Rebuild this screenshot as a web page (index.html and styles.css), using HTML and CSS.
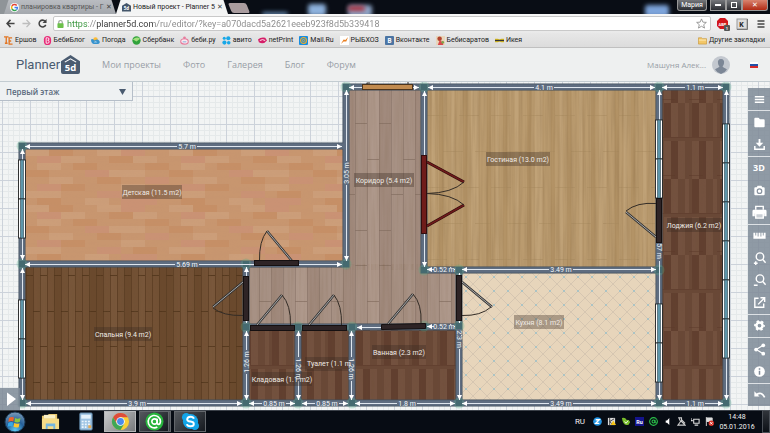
FILE: index.html
```html
<!DOCTYPE html>
<html lang="ru">
<head>
<meta charset="utf-8">
<title>Новый проект - Planner 5D</title>
<link rel="stylesheet" href="styles.css">
</head>
<body>
<div class="screen">
  <header class="browser">
    <div class="tabstrip">
      <div class="glow" aria-hidden="true"><i class="g1"></i><i class="g2"></i><i class="g3"></i><i class="g4"></i><i class="g5"></i></div>
      <div class="tabs">
        <div class="tab">
          <svg class="fav" viewBox="0 0 16 16"><circle cx="8" cy="8" r="8" fill="#fff"/><g fill="none" stroke-width="2.6"><path d="M12 4.500A5.200 5.200 0 0 0 3.500 5.500" stroke="#e34133"/><path d="M3.500 5.500a5.200 5.200 0 0 0 0 5" stroke="#f3b605"/><path d="M3.500 10.500A5.200 5.200 0 0 0 11.500 12" stroke="#32a350"/><path d="M11.500 12a5 5 0 0 0 1.700-4H8" stroke="#4280ef"/></g></svg>
          <span class="tab-title">планировка квартиры - Г</span><button class="x" aria-label="Закрыть вкладку">✕</button>
        </div>
        <div class="tab active">
          <svg class="fav" viewBox="0 0 20 20"><path d="M0 6 10 0l10 6v13H0z" fill="#44566a"/><text x="10" y="16" text-anchor="middle" class="logo-mark">5d</text></svg>
          <span class="tab-title">Новый проект - Planner 5</span><button class="x" aria-label="Закрыть вкладку">✕</button>
        </div>
        <button class="newtab" aria-label="Новая вкладка"></button>
      </div>
      <div class="winbuttons">
        <button class="win user">Мария</button>
        <div class="wingroup"><button class="win" aria-label="Свернуть"><i class="min"></i></button><button class="win" aria-label="Развернуть"><i class="max"></i></button><button class="win close" aria-label="Закрыть">✕</button></div>
      </div>
    </div>
    <div class="toolbar">
      <button class="tool" aria-label="Назад"><svg viewBox="0 0 10 10"><path d="M9.500 5H1.500M5 1 1.200 5 5 9" fill="none" stroke="#444" stroke-width="1.700"/></svg></button>
      <button class="tool" aria-label="Вперёд"><svg viewBox="0 0 10 10"><path d="M.5 5h8M5 1l3.800 4L5 9" fill="none" stroke="#bdbdbd" stroke-width="1.500"/></svg></button>
      <button class="tool" aria-label="Обновить"><svg viewBox="0 0 10 10"><path d="M8 2.600A3.800 3.800 0 1 0 8.600 6.500" fill="none" stroke="#444" stroke-width="1.700"/><path d="M9.500 0v4.500H5z" fill="#444"/></svg></button>
      <div class="omnibox">
        <svg class="lock" viewBox="0 0 8 10"><path d="M2 5V3a2 2 0 0 1 4 0v2" fill="none" stroke="#9aa79a" stroke-width="1.300"/><rect x=".5" y="4" width="7" height="5.500" rx=".8" fill="#6cc04a"/></svg>
        <input class="url" type="text" aria-label="Адрес" value="https://planner5d.com/ru/editor/?key=a070dacd5a2621eeeb923f8d5b339418">
        <button class="star" aria-label="Добавить в закладки"><svg viewBox="0 0 12 12"><path d="m6 1 1.500 3.500 3.800.3-2.900 2.500.9 3.700L6 9l-3.300 2 .9-3.700L.7 4.800l3.800-.3z" fill="#fff" stroke="#888" stroke-width=".9"/></svg></button>
      </div>
      <button class="ext" aria-label="AdBlock Plus"><svg viewBox="0 0 14 14"><path d="M4 1h5l3 3v5l-3 3H4L1 9V4z" fill="#d2151b"/><text x="6.500" y="8.500" class="abp">ABP</text><rect x="8" y="8" width="6" height="6" rx="1" fill="#555"/><text x="11" y="13" class="abp">1</text></svg></button>
      <button class="ext" aria-label="K"><svg viewBox="0 0 14 14"><rect x="2" y="2" width="10" height="10" fill="#ddd" stroke="#999"/><path d="M12.500 2v10.500H2" fill="none" stroke="#777"/><text x="6.500" y="9.500" class="kx">K</text></svg></button>
      <button class="ext" aria-label="Меню"><svg viewBox="0 0 14 14"><path d="M3.500 4h7M3.500 7h7M3.500 10h7" stroke="#444" stroke-width="1.700"/></svg></button>
    </div>
    <nav class="bookmarks">
      <a href="#"><svg viewBox="0 0 10 10"><path d="M0 1h5M2.500 1v7M5 2h4M5 5.500h3M5 9h4.500M5.700 2v7M1 8h3" stroke="#e27522" stroke-width="1.500"/></svg>Ершов</a>
      <a href="#"><svg viewBox="0 0 10 10"><rect x="1" y="0" width="8" height="10" rx="4" fill="#e82a77"/><path d="M3.500 2v6h1.700a1.600 1.600 0 0 0 0-3.200 1.400 1.400 0 0 0 0-2.800z" fill="none" stroke="#fff"/></svg>БебиБлог</a>
      <a href="#"><svg viewBox="0 0 10 10"><circle cx="5" cy="4" r="2.500" fill="#fb3"/><path d="M0 4q2-2 4 1 3-2 5 0 2 3-1 4H3Q0 8 0 4z" fill="#3793ce"/><path d="M3 7q2-2 4 0z" fill="#fff"/></svg>Погода</a>
      <a href="#"><svg viewBox="0 0 10 10"><circle cx="5" cy="5" r="4.600" fill="#31a33c"/><path d="M1 4q4-4 8-1L5 6z" fill="#a5df7e"/></svg>Сбербанк</a>
      <a href="#"><svg viewBox="0 0 10 10"><ellipse cx="5" cy="6" rx="4.200" ry="3" fill="#fce9ef" stroke="#e67c9d" stroke-width="1.200"/><circle cx="5" cy="2" r="1.500" fill="#e67c9d"/><path d="M3 6.500h4" stroke="#76a7d8"/></svg>беби.ру</a>
      <a href="#"><svg viewBox="0 0 10 10"><g fill="#18a8e8"><circle cx="2.500" cy="2.500" r="1.700"/><circle cx="7" cy="2.500" r="2.300"/><circle cx="2.700" cy="7.300" r="2.300"/><circle cx="7.500" cy="7.500" r="2"/></g></svg>авито</a>
      <a href="#"><svg viewBox="0 0 10 10"><path d="M0 4q3-3 8-2l2 3q-4 5-9 2z" fill="#d51d68"/><path d="M2 5q3-2 6 0" stroke="#fff" fill="none"/></svg>netPrint</a>
      <a href="#"><svg viewBox="0 0 10 10"><rect width="10" height="10" rx="1" fill="#168de2"/><circle cx="5" cy="5" r="3.300" fill="none" stroke="#faac1e" stroke-width="1.200"/><circle cx="5" cy="5" r="1.200" fill="none" stroke="#faac1e"/></svg>Mail.Ru</a>
      <a href="#"><svg viewBox="0 0 10 10"><rect width="10" height="10" fill="#fff"/><path d="m1 9 3-5 2 .5L9 1 7 6H4z" fill="#ea8022"/></svg>РЫБХОЗ</a>
      <a href="#"><svg viewBox="0 0 10 10"><rect width="10" height="10" rx="1" fill="#4c75a3"/><text x="5" y="7.500" class="vk">B</text></svg>Вконтакте</a>
      <a href="#"><svg viewBox="0 0 10 10"><rect width="10" height="10" fill="#e9d6bb"/><circle cx="4" cy="3" r="2.500" fill="#b3452e"/><path d="M2 10 4 5l4 2v3z" fill="#d9474a"/><circle cx="7.500" cy="7" r="1.500" fill="#7ba24c"/></svg>Бебисаратов</a>
      <a href="#"><svg viewBox="0 0 10 10"><path d="M0 3h3l2 1 2-1h3v4H7L5 6 3 7H0z" fill="#e4c41d"/><path d="M0 5h10" stroke="#333" stroke-width="1.500"/></svg>Икея</a>
      <a href="#" class="other"><svg viewBox="0 0 10 10"><path d="M.5 2h3.500l1 1h4.500v6h-9z" fill="#f3c768" stroke="#c69434" stroke-width=".7"/><path d="M1 4.500h8" stroke="#fff0c4"/></svg>Другие закладки</a>
    </nav>
  </header>

  <div class="sitebar">
    <a class="brand" href="#" aria-label="Planner 5d">Planner<svg viewBox="0 0 20 20"><path d="M0 6.500 10 0l10 6.500V18q0 2-2 2H2q-2 0-2-2z" fill="#4a5b70"/><path d="M4 7.500 10 4l6 3.500" fill="none" stroke="#fff" stroke-width="1.200"/><text x="10" y="17" text-anchor="middle" class="logo-mark">5d</text></svg></a>
    <nav class="menu"><a href="#">Мои проекты</a><a href="#">Фото</a><a href="#">Галерея</a><a href="#">Блог</a><a href="#">Форум</a></nav>
    <a class="account" href="#">Машуня Алек...<svg viewBox="0 0 18 18"><circle cx="9" cy="9" r="9" fill="#c3c8cf"/><path d="M9 3c2.500 0 3.400 1.800 3 4.200-.2 1.600-.9 2.500-1.400 3 .1 1.600 3.400 1.800 4.300 3.400A9 9 0 0 1 9 18a9 9 0 0 1-5.900-4.400c.9-1.600 4.200-1.800 4.300-3.400-.5-.5-1.200-1.400-1.400-3C5.600 4.800 6.500 3 9 3z" fill="#7c8796"/></svg></a>
    <button class="flag" aria-label="Русский"></button>
  </div>

  <main class="workspace">
    <svg class="plan" viewBox="0 82 770 328" role="img" aria-label="План квартиры">
      <defs>
        <pattern id="grid" width="28" height="28" x="2" y="96" patternUnits="userSpaceOnUse"><rect width="28" height="28" fill="#f2f4f4"/><path d="M6.500 0v28M11.500 0v28M17.500 0v28M22.500 0v28M0 6.500h28M0 11.500h28M0 17.500h28M0 22.500h28" stroke="#e5e9ea"/><path d="M.5 0v28M0 .5h28" stroke="#ccd2da"/></pattern>
        <pattern id="parquet" width="144" height="56" x="25" y="149" patternUnits="userSpaceOnUse">
          <rect width="144" height="56" fill="#c8966f"/>
          <path d="M0 0h24v7H0zM72 0h24v7h-24zM36 7h24v7h-24zM108 7h24v7h-24zM12 14h24v7H12zM84 21h36v7h-36zM24 28h24v7H24zM96 35h24v7H96zM0 42h36v7H0zM60 49h24v7H60z" fill="#cc9e79"/>
          <path d="M24 0h24v7H24zM84 7h24v7H84zM48 14h24v7H48zM120 14h24v7h-24zM0 21h24v7H0zM72 28h24v7H72zM36 35h24v7H36zM108 42h24v7h-24zM12 49h24v7H12z" fill="#c68f66"/>
          <path d="M96 0h24v7H96zM12 7h24v7H12zM60 21h24v7H60zM120 28h24v7h-24zM12 35h24v7H12zM72 42h24v7H72zM96 49h36v7H96z" fill="#ca9274"/>
        </pattern>
        <pattern id="darkwood" width="70" height="71" x="26" y="275" patternUnits="userSpaceOnUse">
          <rect width="70" height="71" fill="#735135"/><path d="M0 0h7v71H0zM63 0h7v71h-7zM28 0h7v71h-7z" fill="#6a492d"/><path d="M14 0h7v71h-7zM42 0h7v71h-7z" fill="#79573b"/>
          <path d="M.5 0v71M7.500 0v71M14.500 0v71M21.500 0v71M28.500 0v71M35.500 0v71M42.500 0v71M49.500 0v71M56.500 0v71M63.500 0v71" stroke="#56391f" stroke-width=".7"/>
          <path d="M0 .5h7M14 .5h7M28 .5h7M42 .5h7M56 .5h7M7 36.500h7M21 36.500h7M35 36.500h7M49 36.500h7M63 36.500h7" stroke="#4e3219" stroke-width=".8"/>
        </pattern>
        <pattern id="greywood" width="72" height="142" x="343" y="123" patternUnits="userSpaceOnUse">
          <rect width="72" height="142" fill="#a79184"/><path d="M0 0h12v142H0zM36 0h12v142H36z" fill="#a18a7d"/><path d="M24 0h12v142H24z" fill="#ae988b"/>
          <path d="M.5 0v142M12.500 0v142M24.500 0v142M36.500 0v142M48.500 0v142M60.500 0v142" stroke="#8c776b" stroke-width=".7"/><path d="M12 .5h12M36 .5h12M24 36.500h12M0 71.500h12M48 71.500h12M60 36.500h12M12 107.500h12M36 107.500h12" stroke="#846f62" stroke-width=".7"/>
        </pattern>
        <pattern id="bamboo" width="64" height="72" x="427" y="115" patternUnits="userSpaceOnUse">
          <rect width="64" height="72" fill="#ba9b6f"/><path d="M4 0h4v72H4zM24 0h4v72h-4zM44 0h8v72h-8z" fill="#c0a277"/><path d="M12 0h4v72h-4zM36 0h4v72h-4zM60 0h4v72h-4z" fill="#b39366"/>
          <path d="M4 0v72M16 0v72M28 0v72M40 0v72M52 0v72M60 0v72" stroke="#a6875a" stroke-width=".5"/><path d="M0 .5h20M32 .5h20M16 36.500h20M48 36.500h16" stroke="#aa8c60" stroke-width=".5"/>
        </pattern>
        <pattern id="walnut" width="28" height="76" x="661" y="103" patternUnits="userSpaceOnUse">
          <rect width="28" height="76" fill="#694837"/><path d="M10 0h7v34h-7zM24 0h4v34h-4zM3 38h7v38H3zM17 38h7v38h-7z" fill="#73513f"/><path d="M3 0h7v34H3zM10 38h7v38h-7z" fill="#613f2f"/><path d="M0 34.500h28M0 72.500h14" stroke="#5a3928" stroke-width=".5"/>
        </pattern>
        <pattern id="tile" width="14" height="14" x="459" y="270" patternUnits="userSpaceOnUse"><rect width="14" height="14" fill="#e7d5bb"/><path d="M0 0 14 14M14 0 0 14" stroke="#d2c3ae" stroke-width=".8"/><path d="M6 6l2 2M8 6 6 8" stroke="#abc3c4"/></pattern>
        <filter id="grainV" x="0" y="0" width="100%" height="100%"><feTurbulence type="fractalNoise" baseFrequency=".35 .015" numOctaves="2" seed="4"/><feColorMatrix values="0 0 0 0 .15  0 0 0 0 .08  0 0 0 0 .03  1.200 0 0 0 -.42"/></filter>
        <filter id="grainH" x="0" y="0" width="100%" height="100%"><feTurbulence type="fractalNoise" baseFrequency=".03 .3" numOctaves="2" seed="9"/><feColorMatrix values="0 0 0 0 .5  0 0 0 0 .28  0 0 0 0 .18  1 0 0 0 -.36"/></filter>
        <marker id="arrow" viewBox="0 0 5 5" refX="5" refY="2.500" markerWidth="5" markerHeight="5" markerUnits="userSpaceOnUse" orient="auto-start-reverse"><path d="M0 0 5 2.500 0 5z" fill="#fff"/></marker>
        <g id="node"><circle r="5.500" fill="#4fae88" opacity=".28"/><rect x="-3" y="-3" width="6" height="6" fill="#456a70"/></g>
        <g id="pane"><rect x="-3.500" y="0" width="7" height="39" fill="#fff" stroke="#222" stroke-width=".9"/><rect x="-1.500" y="0" width="3" height="39" fill="#5e96aa" stroke="#2f4650" stroke-width=".6"/></g>
        <g id="leaf"><path d="M0 0-25-30" stroke="#333" stroke-width="2.400"/><path d="M0 0-25-30" stroke="#aaa" stroke-width="1"/></g>
        <rect id="gap" x="-12" y="-2" width="24" height="4" fill="#5f6d80"/>
        <rect id="gap-short" x="-10" y="-2" width="20" height="4" fill="#5f6d80"/>
      </defs>
      <rect x="-1000" y="-500" width="3000" height="1500" fill="url(#grid)"/>

      <g class="floors">
        <rect x="22" y="146" width="324" height="118" fill="url(#parquet)"/>
        <rect x="22" y="264" width="224" height="139" fill="url(#darkwood)"/>
        <path d="M346 87h78v183h35v57H246v-63h100z" fill="url(#greywood)"/>
        <rect x="424" y="87" width="235" height="183" fill="url(#bamboo)"/>
        <rect x="459" y="270" width="200" height="133" fill="url(#tile)"/>
        <rect x="659" y="87" width="67" height="316" fill="url(#walnut)"/>
        <rect x="246" y="327" width="213" height="76" fill="url(#walnut)"/>
        <rect x="22" y="146" width="324" height="118" filter="url(#grainH)" opacity=".2"/>
        <rect x="22" y="264" width="224" height="139" filter="url(#grainV)" opacity=".45"/>
        <rect x="346" y="87" width="78" height="183" filter="url(#grainV)" opacity=".2"/>
        <rect x="246" y="264" width="213" height="139" filter="url(#grainV)" opacity=".2"/>
        <rect x="424" y="87" width="235" height="183" filter="url(#grainV)" opacity=".28"/>
        <rect x="659" y="87" width="67" height="316" filter="url(#grainV)" opacity=".2"/>
      </g>

      <g fill="none" stroke-linecap="square">
        <path d="M22 146H346M22 146V403M22 264H346M346 87V264M346 87H726M424 87V270M424 270H659M659 87V403M726 87V403M22 403H726M246 264V403M246 327H459M298 327V403M352 327V403M459 270V403" stroke="#414e5c" stroke-width="7"/>
        <path d="M22 146H346M22 146V403M22 264H346M346 87V264M346 87H726M424 87V270M424 270H659M659 87V403M726 87V403M22 403H726M246 264V403M246 327H459M298 327V403M352 327V403M459 270V403" stroke="#5f6d80" stroke-width="5.500"/>
      </g>

      <g>
        <use href="#node" x="22" y="146"/><use href="#node" x="22" y="264"/><use href="#node" x="22" y="403"/><use href="#node" x="346" y="87"/><use href="#node" x="346" y="264"/><use href="#node" x="424" y="87"/><use href="#node" x="424" y="270"/><use href="#node" x="459" y="270"/><use href="#node" x="659" y="87"/><use href="#node" x="659" y="270"/><use href="#node" x="726" y="87"/><use href="#node" x="726" y="403"/><use href="#node" x="659" y="403"/><use href="#node" x="459" y="403"/><use href="#node" x="459" y="326"/><use href="#node" x="424" y="326"/><use href="#node" x="352" y="327"/><use href="#node" x="352" y="403"/><use href="#node" x="298" y="327"/><use href="#node" x="298" y="403"/><use href="#node" x="246" y="327"/><use href="#node" x="246" y="403"/><use href="#node" x="246" y="264"/>
      </g>

      <g class="dims">
        <path d="M25 146.500H342"/><path d="M25 264.500H342"/><path d="M349 87.500H419"/><path d="M428 87.500H655"/><path d="M662 87.500H723"/><path d="M427 269.500H455"/><path d="M462 269.500H656"/><path d="M427 326.500H455"/><path d="M357 327.500H381" class="half"/>
        <path d="M26 403.500H242"/><path d="M249 403.500H295"/><path d="M302 403.500H348"/><path d="M355 403.500H455"/><path d="M462 403.500H656"/><path d="M662 403.500H723"/>
        <path d="M22.500 149V260"/><path d="M22.500 268V400"/><path d="M346.500 90V261"/><path d="M424.500 91V267"/><path d="M659.500 90V400"/><path d="M726.500 90V400"/><path d="M246.500 267V323"/><path d="M246.500 331V400"/><path d="M298.500 331V400"/><path d="M351.500 331V400"/><path d="M459.500 273V323"/><path d="M459.500 331V400"/>
      </g>
      <g>
        <use href="#gap-short" x="187" y="146"/><use href="#gap" x="187" y="264"/><use href="#gap-short" x="544" y="87"/><use href="#gap-short" x="695" y="87"/><use href="#gap-short" x="444" y="270"/><use href="#gap" x="561" y="270"/><use href="#gap-short" x="444" y="327"/>
        <use href="#gap-short" x="137" y="403"/><use href="#gap" x="274" y="403"/><use href="#gap" x="327" y="403"/><use href="#gap-short" x="407" y="403"/><use href="#gap" x="561" y="403"/><use href="#gap-short" x="695" y="403"/>
        <use href="#gap" transform="translate(346 173) rotate(90)"/><use href="#gap" transform="translate(246 362) rotate(90)"/><use href="#gap" transform="translate(298 369) rotate(90)"/><use href="#gap" transform="translate(352 369) rotate(90)"/><use href="#gap-short" transform="translate(459 339) rotate(90)"/><use href="#gap-short" transform="translate(659 251) rotate(90)"/>
      </g>

      <g class="windows">
        <use href="#pane" x="22" y="160"/><use href="#pane" x="22" y="199"/><use href="#pane" x="22" y="300"/><use href="#pane" x="22" y="339"/>
        <use href="#pane" x="659" y="120"/><use href="#pane" x="659" y="159"/><use href="#pane" x="659" y="304"/><use href="#pane" x="659" y="343"/>
        <use href="#pane" x="726" y="124"/><use href="#pane" x="726" y="163"/><use href="#pane" x="726" y="202"/><use href="#pane" x="726" y="241"/><use href="#pane" x="726" y="280"/><use href="#pane" x="726" y="319"/>
      </g>

      <g class="doors">
        <path d="M367 85v-2h3M408 85v-3" class="swing"/><rect x="362.500" y="84.500" width="50" height="5" fill="#c18b4f" stroke="#4b341d"/>
        <path d="M427 162 464 182M427 226 464 205" stroke="#2d0b0b" stroke-width="2.800"/><path d="M427 162 464 182M427 226 464 205" stroke="#6e1a1a" stroke-width="1.600"/>
        <path d="M464 182Q452 193 427 193.500Q452 194 464 205" class="swing"/><rect x="421.500" y="155.500" width="5" height="78" fill="#6f1c1a" stroke="#330d0d"/>
        <use href="#leaf" x="292" y="261"/><path d="M267 231Q259 241 259.500 261" class="swing"/>
        <use href="#leaf" transform="translate(257 325) scale(-1 1)"/><path d="M282 295Q291 305 290.500 325" class="swing"/>
        <use href="#leaf" transform="translate(309 325) scale(-1 1)"/><path d="M334 295Q342 305 341.500 325" class="swing"/>
        <use href="#leaf" transform="translate(388 324) scale(-1 1)"/><path d="M413 294Q422 304 421 323" class="swing"/>
        <use href="#leaf" transform="translate(243 282) rotate(-90)"/><path d="M213 308Q223 316 243 315.500" class="swing"/>
        <use href="#leaf" transform="translate(462 282) rotate(-90) scale(1 -1)"/><path d="M491 307Q481 316 462 315.500" class="swing"/>
        <use href="#leaf" transform="translate(656 237) rotate(-90) scale(-1 1)"/><path d="M626 211Q637 202 656 203.500" class="swing"/>
        <g fill="#2e2426" stroke="#151011"><rect x="254.500" y="260.500" width="44" height="5"/><rect x="250.500" y="325.500" width="44" height="5"/><rect x="302.500" y="325.500" width="44" height="5"/><path d="M381.500 324.500 425.500 323.500v5l-44 1z"/><rect x="243.500" y="276.500" width="5" height="44"/><rect x="456.500" y="275.500" width="5" height="45"/><rect x="656.500" y="198.500" width="5" height="44"/></g>
      </g>

      <g class="rooms">
        <rect x="122" y="185" width="60" height="14"/><text x="152" y="195">Детская (11.5 m2)</text>
        <rect x="354" y="173" width="60" height="14"/><text x="384" y="183">Коридор (5.4 m2)</text>
        <rect x="486" y="152" width="64" height="14"/><text x="518" y="162">Гостиная (13.0 m2)</text>
        <rect x="667" y="218" width="55" height="14"/><text x="694" y="228">Лоджия (6.2 m2)</text>
        <rect x="94" y="327" width="58" height="14"/><text x="123" y="337">Спальня (9.4 m2)</text>
        <rect x="514" y="315" width="50" height="14"/><text x="539" y="325">Кухня (8.1 m2)</text>
        <rect x="372" y="345" width="54" height="14"/><text x="399" y="355">Ванная (2.3 m2)</text>
        <rect x="305" y="357" width="43" height="14"/><text x="307" y="366" class="left">Туалет (1.1 m</text>
        <rect x="252" y="372" width="60" height="14"/><text x="282" y="382">Кладовая (1.1 m2)</text>
      </g>
      <g class="sizes">
        <text x="187" y="149">5.7 m</text><text x="187" y="267">5.69 m</text><text x="544" y="90">4.1 m</text><text x="695" y="90">1.1 m</text><text x="444" y="272">0.52 m</text><text x="561" y="272">3.49 m</text><text x="444" y="329">0.52 m</text>
        <text x="137" y="406">3.9 m</text><text x="274" y="406">0.85 m</text><text x="327" y="406">0.85 m</text><text x="407" y="406">1.8 m</text><text x="561" y="406">3.49 m</text><text x="695" y="406">1.1 m</text>
        <text transform="translate(349 173) rotate(-90)">3.05 m</text><text transform="translate(249 362) rotate(-90)">1.26 m</text><text transform="translate(296 369) rotate(90)">1.26 m</text><text transform="translate(349 369) rotate(90)">1.26 m</text><text transform="translate(457 339) rotate(90)">2.3 m</text><text transform="translate(657 251) rotate(90)">57 m</text>
      </g>
    </svg>

    <select class="floor" aria-label="Этаж"><option>Первый этаж</option></select>

    <div class="sidebar">
      <button aria-label="Меню"><svg viewBox="0 0 16 16"><path d="M3 5h10M3 8h10M3 11h10" stroke="#fff" stroke-width="1.500"/></svg></button>
      <button class="sep" aria-label="Открыть"><svg viewBox="0 0 16 16"><path d="M2.500 4q0-1 1-1H7l1.500 1.500h4q1 0 1 1V12q0 1-1 1h-9q-1 0-1-1z" fill="#fff"/></svg></button>
      <button aria-label="Сохранить"><svg viewBox="0 0 16 16"><path d="M7 2h2v4h3l-4 4.500L4 6h3z" fill="#fff"/><path d="M3 9.500V13h10V9.500" fill="none" stroke="#fff" stroke-width="1.600"/></svg></button>
      <button class="sep three">3D</button>
      <button aria-label="Снимок"><svg viewBox="0 0 16 16"><path d="M3.500 4.500H5l1-1.500h4l1 1.500h1.500q1 0 1 1V12q0 1-1 1h-9q-1 0-1-1V5.500q0-1 1-1z" fill="#fff"/><circle cx="8" cy="8.700" r="2.400" fill="none" stroke="#8993a0" stroke-width="1.300"/></svg></button>
      <button aria-label="Печать"><svg viewBox="0 0 16 16"><path d="M4 5V1.500h8V5" fill="none" stroke="#fff" stroke-width="1.500"/><path d="M2 5h12q1.500 0 1.500 1.500V12H13V9H3v3H.5V6.500Q.5 5 2 5z" fill="#fff"/><path d="M4 9h8v5H4z" fill="#c9ced4" stroke="#fff" stroke-width="1.500"/></svg></button>
      <button class="sep" aria-label="Линейка"><svg viewBox="0 0 16 16"><path d="M1.500 5h2v3h1V5h1.500v4h1V5h2v4h1V5h1.500v3h1V5h2v6.500h-13z" fill="#fff"/></svg></button>
      <button aria-label="Приблизить"><svg viewBox="0 0 16 16"><circle cx="8.500" cy="6" r="4" fill="none" stroke="#fff" stroke-width="1.500"/><path d="m11.500 9 3 3.500M2 13h4M4 11v4" stroke="#fff" stroke-width="1.500"/></svg></button>
      <button aria-label="Отдалить"><svg viewBox="0 0 16 16"><circle cx="8.500" cy="6" r="4" fill="none" stroke="#fff" stroke-width="1.500"/><path d="m11.500 9 3 3.500M2 13h4" stroke="#fff" stroke-width="1.500"/></svg></button>
      <button aria-label="Во весь экран"><svg viewBox="0 0 16 16"><path d="M7 3.500H3v9.500h9.500V9M9 3h4.500v4.500M13 3.500 6.500 10" fill="none" stroke="#fff" stroke-width="1.500"/></svg></button>
      <button class="sep" aria-label="Настройки"><svg viewBox="0 0 16 16"><circle cx="8" cy="8" r="3.300" fill="none" stroke="#fff" stroke-width="2.600"/><circle cx="8" cy="8" r="4.800" fill="none" stroke="#fff" stroke-width="1.900" stroke-dasharray="2.500 2.527" stroke-dashoffset="1.200"/></svg></button>
      <button class="sep" aria-label="Поделиться"><svg viewBox="0 0 16 16"><path d="M12 3.500 4.500 8l7.500 4.500" fill="none" stroke="#fff" stroke-width="1.300"/><g fill="#fff"><circle cx="12" cy="3.500" r="2"/><circle cx="4.300" cy="8" r="2"/><circle cx="12" cy="12.500" r="2"/></g></svg></button>
      <button aria-label="Информация"><svg viewBox="0 0 16 16"><circle cx="8" cy="8" r="5.700" fill="#fff"/><path d="M8 4.500v1.600M8 7.200v4.200" stroke="#7f8997" stroke-width="1.600"/></svg></button>
      <button class="sep" aria-label="Отменить"><svg viewBox="0 0 16 16"><path d="M5 8q5-3.500 8.500 3" fill="none" stroke="#fff" stroke-width="1.800"/><path d="M2.500 4.500v5.500H8z" fill="#fff"/></svg></button>
    </div>
    <button class="expand" aria-label="Каталог"><svg viewBox="0 0 20 22"><path d="M7 4.500 16 11l-9 7z" fill="#fff"/></svg></button>
  </main>

  <footer class="taskbar">
    <button class="start" aria-label="Пуск"><svg viewBox="0 0 22 22"><defs><radialGradient id="orb" cx=".5" cy=".9" r=".9"><stop offset="0" stop-color="#5fc8ef"/><stop offset=".5" stop-color="#245f9a"/><stop offset="1" stop-color="#7f9db9"/></radialGradient></defs><circle cx="11" cy="11" r="10" fill="url(#orb)" stroke="#1c3852"/><path d="M5 7q2.500-1.500 5-.5l-.7 4Q7 9.500 4.400 11z" fill="#f0642b"/><path d="M11 7q2.500 1.300 5.500 0l-.8 4q-2.500 1-5.300-.3z" fill="#8cc63e"/><path d="M4.200 12q2.500-1.500 4.900-.5l-.7 4q-2.200-1-4.800.3z" fill="#36a9e8"/><path d="M10.200 12q2.500 1.300 5.300.2l-.8 4q-2.500 1-5.200-.4z" fill="#fdc52c"/></svg></button>
    <div class="apps">
      <button aria-label="Проводник"><svg viewBox="0 0 20 20"><path d="M1 4h6l1-2h9v14H1z" fill="#e8c76c"/><path d="M3 3h12v4H3z" fill="#f8efc6"/><path d="M1 7h18v11H1z" fill="#f6dc88"/><path d="M5 12h10v6h-2v-3H7v3H5z" fill="#75b6df"/></svg></button>
      <button aria-label="Калькулятор"><svg viewBox="0 0 20 20"><rect x="4" y="1" width="13" height="18" rx="1" fill="#9fc5e4" stroke="#587f9f"/><path d="M5.500 3h10v4h-10z" fill="#e6f3fb"/><path d="M6 10h9M6 13h9M6 16h5" stroke="#edf6fc" stroke-width="1.800" stroke-dasharray="2 1.300"/><path d="M13 14h3v3h-3z" fill="#e7ab54"/></svg></button>
      <button class="on lit" aria-label="Chrome"><svg viewBox="0 0 20 20"><circle cx="10" cy="10" r="9" fill="#f9cf35"/><path d="M2.200 5.500A9 9 0 0 1 17.800 5.500H10L6.100 12.300z" fill="#dd4c3b"/><path d="M2.200 5.500A9 9 0 0 0 10 19l4-6.700H6.100z" fill="#3fa757"/><circle cx="10" cy="10" r="4.500" fill="#fff"/><circle cx="10" cy="10" r="3.600" fill="#4a8cec"/></svg></button>
      <button class="on stack" aria-label="Агент"><svg viewBox="0 0 20 20"><circle cx="10" cy="10" r="9.500" fill="#27b43c"/><circle cx="10" cy="10" r="2.800" fill="none" stroke="#fff" stroke-width="1.700"/><path d="M12.800 7v4q0 2 1.500 2t2-3A6.500 6.500 0 1 0 13 15.800" fill="none" stroke="#fff" stroke-width="1.700"/></svg></button>
      <button class="on" aria-label="Skype"><svg viewBox="0 0 20 20"><circle cx="10" cy="10" r="8" fill="#13a5e8"/><circle cx="5.500" cy="5.500" r="4.500" fill="#13a5e8"/><circle cx="14.500" cy="14.500" r="4.500" fill="#13a5e8"/><path d="M13.500 7Q13 5 10 5T6.500 7.500Q6.500 9.500 10 10t3.500 2.500Q13.500 15 10 15t-3.700-2.200" fill="none" stroke="#fff" stroke-width="2"/></svg></button>
    </div>
    <div class="tray">
      <span class="lang">RU</span>
      <svg viewBox="0 0 10 10"><circle cx="5" cy="5" r="4.800" fill="#2697e5"/><path d="M3 3h4L3 7h4" fill="none" stroke="#fff" stroke-width="1.500"/></svg>
      <svg viewBox="0 0 10 10"><path d="M1 1h8v8H1z" fill="#ddd"/><path d="M3 1v8M8 2 3 5l4 4" stroke="#333" fill="none"/><path d="m7 4 3 5H4z" fill="#f5c518"/></svg>
      <svg viewBox="0 0 10 10"><path d="M1 1q4-1 5 2 4 0 4 3-1 3-4 3-4-1-5-8z" fill="#79bd2b"/><path d="m4 5 1.500 2L8 4" fill="none" stroke="#fff"/></svg>
      <svg viewBox="0 0 10 10"><rect width="10" height="10" fill="#14148c"/><text x="5" y="7.500" class="ru">Ru</text></svg>
      <svg viewBox="0 0 10 10"><circle cx="5" cy="5" r="4.300" fill="none" stroke="#2bc14a" stroke-width="1.200"/><circle cx="5" cy="5" r="1.600" fill="none" stroke="#2bc14a" stroke-width="1.200"/><path d="M6.800 3v3.500h2" stroke="#2bc14a" fill="none"/></svg>
      <svg viewBox="0 0 10 10"><path d="M3 4h1.500L7 1v8L4.500 6.500H3z" fill="#fff"/></svg>
      <svg viewBox="0 0 10 10"><path d="M2 1h3v4l4 4H1l3-4zM5 3l4 4" fill="none" stroke="#ccc" stroke-width="1.200"/></svg>
      <svg viewBox="0 0 10 10"><path d="M3 2.500h6v4.500H3zM0 1v3h2M4 9h4" fill="none" stroke="#ddd" stroke-width="1.200"/></svg>
      <svg viewBox="0 0 10 10"><path d="M1.500 0v10M2 1h6v4H2z" fill="#ddd" stroke="#ddd"/><circle cx="7" cy="7" r="3" fill="#d93025"/><path d="m5.700 5.700 2.600 2.600m0-2.600L5.700 8.300" stroke="#fff"/></svg>
      <div class="clock"><span>14:48</span><span>05.01.2016</span></div>
      <button class="desktop" aria-label="Свернуть все окна"></button>
    </div>
  </footer>
</div>
</body>
</html>
```
FILE: styles.css
```css
* { box-sizing: border-box; }
body { margin: 0; font-family: "Open Sans", "Noto Sans", sans-serif; }
button { border: 0; padding: 0; background: none; font: inherit; color: inherit; display: flex; align-items: center; justify-content: center; }
a { color: inherit; text-decoration: none; }
svg { display: block; flex: none; }

.screen { display: flex; flex-direction: column; height: 100vh; overflow: hidden; background: #eef0f1; }

/* Browser frame */
.browser, .taskbar { font-family: Roboto, "Open Sans", sans-serif; }
.tabstrip { position: relative; display: flex; justify-content: space-between; height: 14px; background: #090d15; overflow: hidden; }
.glow { position: absolute; inset: 0; }
.glow i { position: absolute; filter: blur(2px); border-radius: 3px; }
.g1 { left: 262px; top: 12px; width: 26px; height: 4px; background: #6488b0; }
.g2 { left: 308px; top: 4px; width: 18px; height: 12px; background: #8db1dc; }
.g3 { left: 348px; top: 5px; width: 24px; height: 12px; background: #8fa6c8; }
.g4 { left: 348px; top: 6px; width: 17px; height: 5px; background: #a82f3c; }
.g5 { left: 645px; top: 5px; width: 24px; height: 12px; background: #7ca3da; }
.tabs { position: relative; display: flex; padding-left: 4px; background: linear-gradient(90deg, #8f9498 10px, transparent 10px); }
.tab { display: flex; align-items: center; width: 112px; padding: 0 4px 0 6px; gap: 2px; color: #555; font-size: 7px; background: linear-gradient(#b9bcc1, #a4a8ad); clip-path: polygon(4% 0, 96% 0, 100% 100%, 0 100%); }
.tab.active { color: #222; background: #f3f4f4; }
.fav { width: 9px; height: 9px; }
.tab-title { flex: 1; white-space: nowrap; }
.x { width: 8px; font-size: 7px; color: #444; }
.newtab { width: 18px; height: 10px; margin: 3px 0 0 2px; background: #a99c9f; transform: skewX(22deg); border-radius: 2px; }
.winbuttons { position: relative; display: flex; gap: 3px; padding-right: 2px; height: 11px; }
.wingroup { display: flex; }
.win { width: 16px; height: 11px; border: 1px solid #999; border-top: 0; background: linear-gradient(#75777b, #2c2e33); color: #fff; font-size: 7px; }
.win.user { width: 30px; border-radius: 0 0 3px 3px; }
.win.close { width: 26px; background: linear-gradient(#d9846f, #b02a14); border-radius: 0 0 3px 0; }
.min { width: 6px; height: 2px; background: #fff; }
.max { width: 6px; height: 6px; border: 1px solid #fff; }

.toolbar { display: flex; align-items: center; gap: 4px; height: 19px; padding: 0 2px 0 5px; background: linear-gradient(#f6f6f6, #e9e9e9); }
.tool { width: 10px; height: 12px; margin-right: 2px; }
.tool svg { width: 9px; height: 9px; }
.omnibox { flex: 1; display: flex; align-items: center; height: 15px; padding: 0 3px 0 3px; background: #fff; border: 1px solid #c9c9c9; border-radius: 2px; }
.lock { width: 7px; height: 10px; }
.url { flex: 1; min-width: 0; height: 13px; margin-left: 3px; padding: 0; border: 0; outline: 0; font: 9px Roboto, sans-serif; color: transparent; background: linear-gradient(90deg, #35943a 21px, #888 21px 30px, #333 30px 86px, #888 86px); background-clip: text; -webkit-background-clip: text; }
.star svg { width: 11px; height: 11px; }
.ext { width: 15px; }
.ext svg { width: 14px; height: 14px; }
.abp { font: bold 4px Roboto, sans-serif; fill: #fff; text-anchor: middle; }
.kx { font: bold 7px Roboto, sans-serif; fill: #222; text-anchor: middle; }

.bookmarks { display: flex; align-items: center; gap: 6px; height: 15px; padding: 0 5px 0 4px; background: linear-gradient(#e7e7e7, #dcdcdc); border-bottom: 1px solid #c0c0c0; font-size: 7px; color: #222; white-space: nowrap; }
.bookmarks a { display: flex; align-items: center; gap: 2px; }
.bookmarks svg { width: 9px; height: 9px; }
.bookmarks .other { margin-left: auto; }
.vk { font: bold 7px Roboto, sans-serif; fill: #fff; text-anchor: middle; }

/* Site header */
.sitebar { display: flex; align-items: center; height: 34px; padding: 0 12px 0 16px; background: #eef0f0; border-bottom: 1px solid #c3ccd1; color: #989ea6; font-size: 9px; white-space: nowrap; }
.brand { display: flex; align-items: center; gap: 1px; font: 13px Roboto, sans-serif; color: #4a5b70; }
.brand svg { width: 19px; height: 19px; }
.logo-mark { font: bold 10px "Open Sans", sans-serif; fill: #fff; }
.menu { display: flex; gap: 22px; margin-left: 22px; }
.account { display: flex; align-items: center; gap: 6px; margin-left: auto; font-size: 8px; }
.account svg { width: 18px; height: 18px; }
.flag { width: 8px; height: 6px; margin-left: 20px; background: linear-gradient(#fff 2px, #2452a8 2px 4px, #d62b2b 4px); }

/* Editor */
.workspace { position: relative; flex: 1; min-height: 0; overflow: hidden; }
.plan { width: 100%; height: 100%; overflow: visible; }
.dims path { fill: none; stroke: #dfe6ee; stroke-width: 1; marker-start: url(#arrow); marker-end: url(#arrow); }
.dims .half { marker-end: none; }
.swing { fill: none; stroke: #332c26; stroke-width: 1; }
.rooms rect { fill: #3a2a22; opacity: .35; }
.rooms text { font: 7px Roboto, sans-serif; fill: #f0ebe5; text-anchor: middle; }
.rooms .left { text-anchor: start; }
.sizes text { font: 7px Roboto, sans-serif; fill: #f2f5f8; text-anchor: middle; }

.floor { position: absolute; left: 0; top: 0; width: 133px; height: 19px; padding: 0 6px; appearance: none; border: 1px solid #b5bec8; border-width: 0 1px 1px 0; border-radius: 0; font: 600 8px "Open Sans", sans-serif; color: #5a6a7c; background: #eef1f2 url("data:image/svg+xml,%3Csvg xmlns='http://www.w3.org/2000/svg' width='7' height='7'%3E%3Cpath d='M0 1h7L3.500 7z' fill='%234a5b70'/%3E%3C/svg%3E") no-repeat right 6px center; }

.sidebar { position: absolute; right: 0; top: 6px; bottom: 4px; width: 22px; display: flex; flex-direction: column; background: rgba(126, 137, 151, .85); color: #fff; }
.sidebar button { flex: 1; min-height: 0; }
.sidebar .sep { border-top: 1px solid #dde1e5; }
.sidebar svg { width: 15px; height: 15px; }
.three { font-size: 9px; font-weight: 700; }
.expand { position: absolute; left: 0; bottom: 0; width: 20px; height: 22px; background: rgba(126, 137, 151, .85); }
.expand svg { width: 20px; height: 22px; }

/* Taskbar */
.taskbar { display: flex; align-items: center; height: 23px; padding-left: 4px; background: linear-gradient(#3a4048 1px, #070c14 1px); color: #f2f2f2; }
.start svg { width: 22px; height: 22px; }
.apps { display: flex; gap: 3px; margin-left: 8px; }
.apps button { width: 32px; height: 21px; }
.apps svg { width: 19px; height: 19px; }
.apps .on { border: 1px solid #63676c; background: linear-gradient(135deg, #54585d, #15191f); }
.apps .lit { background: linear-gradient(135deg, #c9cacb, #77797c); border-color: #b5b7b9; }
.apps .stack { border-right: 3px double #63676c; }
.tray { display: flex; align-items: center; gap: 4px; margin-left: auto; height: 23px; }
.tray svg { width: 9px; height: 9px; }
.tray svg + svg { margin-left: 1px; }
.lang { margin: 0 4px 0 0; font-size: 8px; }
.ru { font: bold 6px Roboto, sans-serif; fill: #fff; text-anchor: middle; }
.clock { display: flex; flex-direction: column; align-items: center; width: 38px; margin-right: 2px; font-size: 7px; line-height: 10px; }
.desktop { width: 8px; height: 23px; border: 1px solid #4a4f56; background: linear-gradient(#30343a, #0c1016); }
```
